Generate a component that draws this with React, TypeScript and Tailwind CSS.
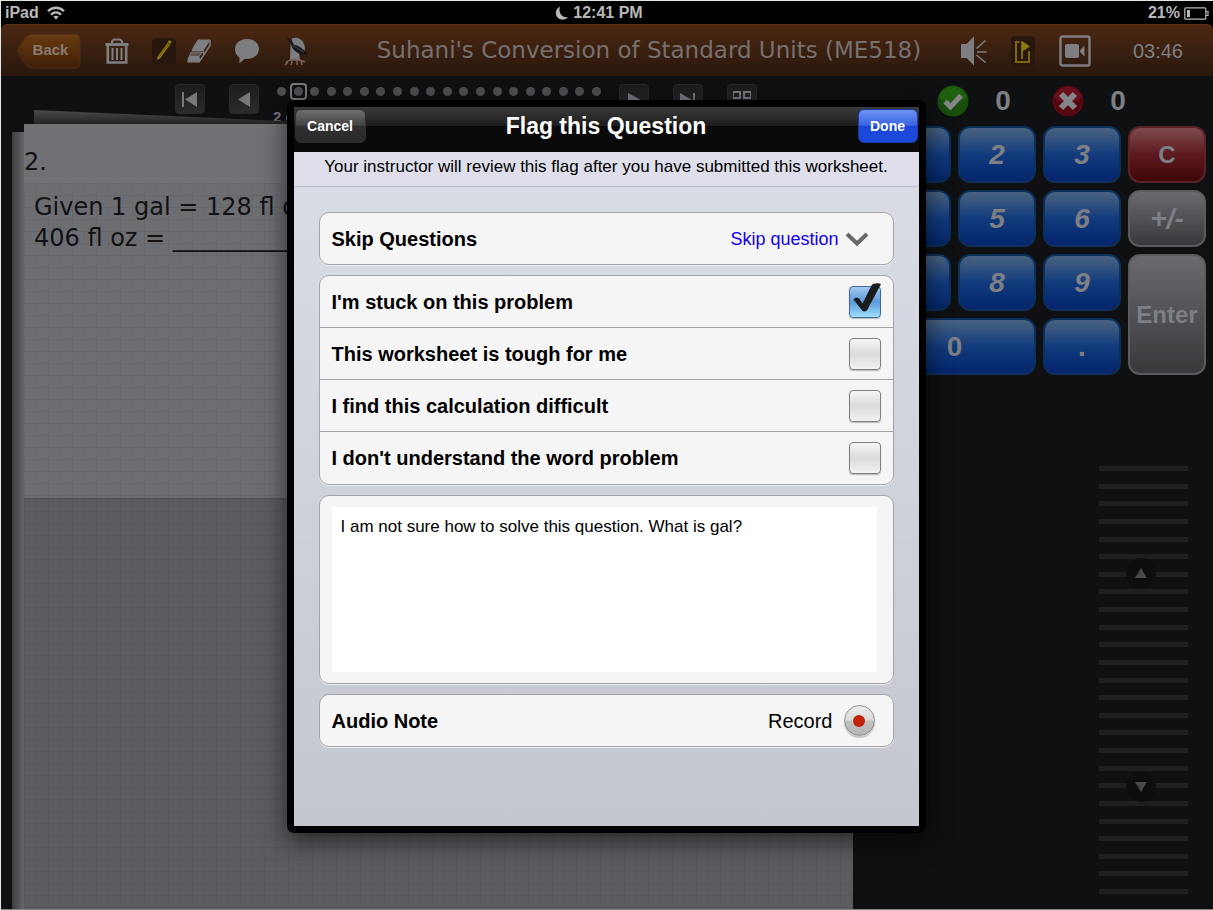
import { useState } from 'react';
import type { ReactNode } from 'react';
import clsx from 'clsx';

const REASONS = [
  "I'm stuck on this problem",
  'This worksheet is tough for me',
  'I find this calculation difficult',
  "I don't understand the word problem",
];

const DOTS = Array.from({ length: 20 }, (_, i) => i);
const RULES = Array.from({ length: 25 }, (_, i) => i);

function StatusBar() {
  return (
    <header className="grid h-[23px] grid-cols-3 items-center bg-black px-1 text-base font-bold text-[#b9b9b9]">
      <div className="flex items-center gap-2">
        <span>iPad</span>
        <svg viewBox="0 0 18 14" className="h-[14px] w-[18px]" fill="none" stroke="currentColor" strokeWidth="2.4">
          <path d="M1 5.2C5.5.6 12.5.6 17 5.2" />
          <path d="M4 8.600c2.900-2.800 7.100-2.800 10 0" />
          <path d="M9 13.500 6.300 10.800c1.600-1.500 3.800-1.500 5.400 0z" fill="currentColor" stroke="none" />
        </svg>
      </div>
      <div className="flex items-center justify-center gap-1 pr-4">
        <svg viewBox="0 0 14 14" className="h-[14px] w-[14px]" fill="currentColor">
          <path d="M5 .5C.8 2.400-.4 7.500 2.200 11c2.600 3.400 8 3.500 10.800.2C7.800 12 2.800 7.200 5 .5z" />
        </svg>
        <span>12:41 PM</span>
      </div>
      <div className="flex items-center justify-end gap-1">
        <span>21%</span>
        <svg viewBox="0 0 25 13" className="h-[13px] w-[25px]" fill="none" stroke="currentColor" strokeWidth="1.2">
          <rect x=".8" y=".8" width="21" height="11.4" rx="1" />
          <path d="M22 4.500h2v4h-2" />
          <rect x="3" y="3" width="3" height="7" fill="currentColor" stroke="none" />
        </svg>
      </div>
    </header>
  );
}

function Toolbar() {
  return (
    <div className="flex h-[52px] items-center rounded-t-md border-t border-[#5a3418] bg-linear-to-b from-[#4b2811] to-[#29170c] pr-[30px] pl-[15px] text-[#7d7e82]">
      <button type="button" className="relative h-9 w-[65px] pl-1 text-[15px] font-bold text-[#8b7b70]">
        <svg viewBox="0 0 65 36" className="absolute inset-0 h-9 w-[65px]">
          <defs>
            <linearGradient id="back" x1="0" y1="0" x2="0" y2="1">
              <stop offset="0" stopColor="#673b11" />
              <stop offset=".5" stopColor="#552d0c" />
              <stop offset="1" stopColor="#3f1f08" />
            </linearGradient>
          </defs>
          <path d="M1 18C6 11 8 1 18 1h41a5 5 0 0 1 5 5v24a5 5 0 0 1-5 5H18C8 35 6 25 1 18z" fill="url(#back)" stroke="#4c2d18" strokeWidth="1" />
        </svg>
        <span className="relative">Back</span>
      </button>

      <button type="button" aria-label="Clear" className="ml-6">
        <svg viewBox="0 0 24 26" className="h-[26px] w-6" fill="none" stroke="currentColor" strokeWidth="2">
          <path d="M.5 6.500h23" strokeWidth="3" />
          <path d="M7 5.500V3.200L9 1.500h6l2 1.700v2.300" />
          <path d="M2.800 7v17.500h18.400V7" strokeWidth="2.6" />
          <path d="M7.500 10v12M12 10v12M16.500 10v12" />
        </svg>
      </button>

      <button type="button" aria-label="Pencil" className="ml-[23px] rounded-sm bg-[#27170d]">
        <svg viewBox="0 0 24 26" className="h-[26px] w-6">
          <path d="M6.500 20 17 5.500" stroke="#8f7a08" strokeWidth="3" />
          <path d="M7 19 17 5" stroke="#665906" strokeWidth="1" />
          <path d="m5 22 .5-3 2.200 1.600z" fill="#8d7350" />
          <path d="m17 5 1.500-2.200" stroke="#8d8020" strokeWidth="3" />
        </svg>
      </button>

      <button type="button" aria-label="Eraser" className="ml-[11px]">
        <svg viewBox="0 0 24 26" className="h-[26px] w-6" strokeLinejoin="round">
          <path d="M11 2h12l-6.500 10H5z" fill="currentColor" stroke="currentColor" />
          <path d="M23 2v5.500L12 24v-5.500" fill="none" stroke="currentColor" strokeWidth="1.5" />
          <path d="M5 12.500h11.500v5.500" fill="none" stroke="currentColor" strokeWidth="1" />
          <path d="M4.500 14h11L12 18.500H2z" fill="#5f564f" stroke="currentColor" strokeWidth="1" />
          <path d="M1.500 19.500H12L11.500 24H.8z" fill="currentColor" stroke="currentColor" strokeWidth="1" />
        </svg>
      </button>

      <button type="button" aria-label="Comment" className="ml-[23px]">
        <svg viewBox="0 0 26 26" className="h-[26px] w-[26px]" fill="currentColor">
          <path d="M13 1c7 0 12 4.300 12 10s-5 10-12 10c-1 0-1.600 0-2.400-.2-1.500 1.900-3.400 3.400-5.700 4 .7-1.600.9-3.600.5-5.300C2.600 17.700 1 14.800 1 11 1 5.300 6 1 13 1z" />
        </svg>
      </button>

      <button type="button" aria-label="Scratchpad" className="ml-6">
        <svg viewBox="0 0 26 30" className="h-[30px] w-[26px]">
          <path d="M8 2.500C13 .5 18 3 20 8c1 3 1 5 .5 7L15 16.500l1 8H6L6.500 10z" fill="#7d7e82" />
          <path d="M2.500 1.500 7 3l3 6c3 0 7 2 9.500 5l4 3-2 2c-5 0-9-2-12-5.500C7.500 11.500 8 10 7 8z" fill="#17171a" />
          <path d="m9 9.500 11 7" stroke="#47484c" strokeWidth="1" />
          <path d="M2 26c5-3.500 13-3.500 19 0M1 29l3-3M7 29l1-4M13 29v-4M18 29l-1-4" fill="none" stroke="#7b6355" strokeWidth="1.5" />
        </svg>
      </button>

      <h1 className="min-w-0 flex-1 truncate pl-[27px] text-center font-['DejaVu_Sans',sans-serif] text-[23px] text-[#77706e]">
        Suhani's Conversion of Standard Units (ME518)
      </h1>

      <div className="flex items-center gap-6">
        <button type="button" aria-label="Sound">
          <svg viewBox="0 0 26 30" className="h-[30px] w-[26px]" fill="currentColor">
            <path d="M0 8h5.500L13 .5v29L5.500 22H0z" />
            <path d="m15.500 12.500 9-8M16 16h9.500M15.500 19l9 7.500" stroke="currentColor" strokeWidth="1.6" />
          </svg>
        </button>
        <button type="button" aria-label="Flag question" className="rounded-sm bg-[#27170d]">
          <svg viewBox="0 0 24 30" className="h-[30px] w-6" fill="none" stroke="#80650a" strokeWidth="2">
            <path d="M8.500 6H5v20h13V15" />
            <path d="M11 23V5.500" />
            <path d="m11 5 8 5.500-8 5z" fill="#8d7a0c" stroke="none" />
          </svg>
        </button>
        <button type="button" aria-label="Video">
          <svg viewBox="0 0 32 32" className="h-8 w-8" fill="currentColor">
            <rect x="1.500" y="1.500" width="29" height="29" rx="2" fill="none" stroke="currentColor" strokeWidth="2.4" />
            <rect x="6" y="9" width="14" height="14" rx="2" />
            <path d="m21 15.500 4.500-5v11L21 17z" />
          </svg>
        </button>
      </div>
      <time className="ml-[42px] text-xl">03:46</time>
    </div>
  );
}

function NavButton({ label, children }: { label: string; children: ReactNode }) {
  return (
    <button
      type="button"
      aria-label={label}
      className="flex h-[30px] w-[30px] items-center justify-center rounded-sm border border-[#27282a] bg-linear-to-b from-[#1b1c1e] to-[#2b2c2e] text-[#77787b]"
    >
      <svg viewBox="0 0 18 18" className="h-[18px] w-[18px]" fill="currentColor">
        {children}
      </svg>
    </button>
  );
}

function QuestionNav() {
  return (
    <nav className="flex h-12 items-start gap-[14px] pt-2 pl-[174px]">
      <div className="flex gap-6">
        <NavButton label="First question">
          <path d="M1 2h2v15H1zM16 2v15L4 9.500z" />
        </NavButton>
        <NavButton label="Previous question">
          <path d="M15 2v15L3 9.500z" />
        </NavButton>
      </div>
      <div className="w-[332px] pt-[3px]">
        <ol className="flex justify-between px-1">
          {DOTS.map((n) => (
            <li key={n} className="relative h-[9px] w-[9px] rounded-full bg-[#4d4e51]">
              {n === 1 && <span className="absolute -inset-1 rounded-sm border-2 border-[#77787b]" />}
            </li>
          ))}
        </ol>
        <p className="mt-[13px] text-[15px] leading-4 font-bold text-[#77787b]">2 of 20</p>
      </div>
      <div className="flex gap-6">
        <NavButton label="Next question">
          <path d="M3 3v14l13-7z" />
        </NavButton>
        <NavButton label="Last question">
          <path d="M1 3v14l12-7zM14 3h2v14h-2z" />
        </NavButton>
        <NavButton label="All questions">
          <path d="M-1 1h9v8h-9zm2 2v4h5V3zM10 1h9v8h-9zm2 2v4h5V3z" fillRule="evenodd" />
        </NavButton>
      </div>
    </nav>
  );
}

const GRID =
  'bg-[linear-gradient(#0000000b_1px,transparent_1px),linear-gradient(90deg,#0000000b_1px,transparent_1px)] bg-[size:12px_12px]';

function Worksheet() {
  return (
    <section className="relative ml-[23px] flex flex-1 flex-col font-['DejaVu_Sans',sans-serif] text-2xl text-[#121214]">
      {/* loose sheets lying under the page */}
      <div className="absolute -top-[14px] left-[10px] h-[14px] w-[320px] bg-linear-to-b from-[#4a4b4d] to-[#232426] [clip-path:polygon(0_0,100%_100%,0_100%)]" />
      <div className="absolute top-2 bottom-0 -left-3 w-3 bg-linear-to-r from-[#3d3e41] to-[#66676b]" />
      <div className="relative h-[59px] bg-[#707175] pt-[23px]">
        <h2 className="leading-[31px]">2.</h2>
      </div>
      <div className={clsx('relative h-[315px] bg-[#6d6e72] pt-[9px] pl-[10px] leading-[31px]', GRID)}>
        <p>Given 1 gal = 128 fl oz,</p>
        <p>406 fl oz = __________ gal</p>
      </div>
      <div className={clsx('relative flex-1 border-t border-[#505154] bg-[#5b5c60]', GRID)} />
    </section>
  );
}

const KEY_TONES = {
  blue: 'border-[#0b3059] from-[#48627f] via-[#123b7d] to-[#05246c]',
  red: 'border-[#5c2327] from-[#7d4a4e] via-[#5d1a1e] to-[#3f0709]',
  gray: 'border-[#5a5b5f] from-[#6a6b6f] via-[#515255] to-[#38393b]',
};

function Key({ label, tone = 'blue', className }: { label: string; tone?: keyof typeof KEY_TONES; className?: string }) {
  return (
    <button
      type="button"
      className={clsx(
        'flex items-center justify-center rounded-xl border-2 bg-linear-to-b',
        KEY_TONES[tone],
        className,
      )}
    >
      {label}
    </button>
  );
}

function Keypad() {
  return (
    <div className="grid auto-rows-[57px] grid-cols-[repeat(4,78px)] justify-end gap-[7px] text-[28px] font-bold text-[#7d7f84]">
      <Key label="1" />
      <Key label="2" className="italic" />
      <Key label="3" className="italic" />
      <Key label="C" tone="red" className="text-2xl" />
      <Key label="4" />
      <Key label="5" className="italic" />
      <Key label="6" className="italic" />
      <Key label="+/-" tone="gray" className="italic" />
      <Key label="7" />
      <Key label="8" className="italic" />
      <Key label="9" className="italic" />
      <Key label="Enter" tone="gray" className="row-span-2 text-2xl" />
      <Key label="0" className="col-span-2" />
      <Key label="." />
    </div>
  );
}

function Score() {
  return (
    <div className="flex h-[50px] items-center pl-[84px] text-[28px] font-bold text-[#7d7f84]">
      <svg viewBox="0 0 32 32" className="h-8 w-8">
        <circle cx="16" cy="16" r="15.500" fill="#174f0b" />
        <path d="M2 13C6-2 26-2 30 13c-8 5-20 6-28 0z" fill="#216011" />
        <path d="m8 16.500 5.500 5.500L24 10.500" fill="none" stroke="#85868a" strokeWidth="5" />
      </svg>
      <span className="w-[68px] text-center">0</span>
      <svg viewBox="0 0 32 32" className="ml-[15px] h-8 w-8">
        <circle cx="16" cy="16" r="15.500" fill="#56060f" />
        <path d="M2 13C6-2 26-2 30 13c-8 5-20 6-28 0z" fill="#68101b" />
        <path d="m9 9 14 14M23 9 9 23" stroke="#85868a" strokeWidth="6" />
      </svg>
      <span className="w-[68px] text-center">0</span>
    </div>
  );
}

function ScrollRuler() {
  return (
    <div className="relative mt-[91px] mr-[18px] mb-[15px] flex w-[89px] flex-1 flex-col justify-between self-end">
      {RULES.map((n) => (
        <div key={n} className="h-[5px] bg-[#1e1f21]" />
      ))}
      <button type="button" aria-label="Scroll up" className="absolute top-1/4 left-[27px] flex h-[30px] w-[30px] -translate-y-1/2 items-center justify-center rounded-full bg-[#0c0d0e]">
        <svg viewBox="0 0 12 10" className="h-[10px] w-3" fill="#47484b"><path d="M6 0l6 10H0z" /></svg>
      </button>
      <button type="button" aria-label="Scroll down" className="absolute top-3/4 left-[27px] flex h-[30px] w-[30px] -translate-y-1/2 items-center justify-center rounded-full bg-[#0c0d0e]">
        <svg viewBox="0 0 12 10" className="h-[10px] w-3" fill="#47484b"><path d="M0 0h12L6 10z" /></svg>
      </button>
    </div>
  );
}

const CARD = 'rounded-[10px] border border-[#a3a4a8] bg-[#f5f5f5] shadow-[0_1px_0_#eceef2]';

function FlagDialog() {
  const [checked, setChecked] = useState([true, false, false, false]);
  const [note, setNote] = useState('I am not sure how to solve this question. What is gal?');

  const toggle = (index: number) => setChecked(checked.map((value, i) => (i === index ? !value : value)));

  return (
    <div className="absolute inset-x-0 top-[99px] flex justify-center pr-[2px]">
      <div
        role="dialog"
        aria-labelledby="flag-title"
        className="w-[639px] rounded-[7px] border-[7px] border-black bg-linear-to-b from-[#dcdfe8] to-[#c4c7cf] text-black shadow-[0_8px_26px_rgba(0,0,0,0.6)]"
      >
        <div className="flex h-[45px] items-start justify-between bg-[linear-gradient(#3b3b3b,#1c1c1c_42%,#0a0a0a_43%,#0a0a0a)] px-px pt-[2px] text-white">
          <button type="button" className="h-[34px] w-[71px] rounded-md border border-[#2f2f2f] bg-[linear-gradient(#6e6e6e,#424242_48%,#303030_50%,#2a2a2a)] text-sm font-bold">
            Cancel
          </button>
          <h2 id="flag-title" className="text-[23px] leading-[34px] font-bold">
            Flag this Question
          </h2>
          <div className="flex w-[71px] justify-end">
            <button type="button" className="h-[34px] w-[60px] rounded-md border border-[#1c3aa0] bg-[linear-gradient(#6f93f3,#3b63e4_48%,#1c46da_50%,#1c48dc)] text-sm font-bold">
              Done
            </button>
          </div>
        </div>

        <p className="h-[35px] border-b border-[#b9bcc8] bg-[#dedfeb] text-center text-[17px] leading-[30px]">
          Your instructor will review this flag after you have submitted this worksheet.
        </p>

        <form className="flex flex-col gap-[10px] px-[25px] pt-[25px] pb-[79px] text-xl" onSubmit={(e) => e.preventDefault()}>
          <div className={clsx('flex h-[53px] items-center justify-between pr-6 pl-3', CARD)}>
            <label htmlFor="skip" className="font-bold">Skip Questions</label>
            <div className="relative flex items-center">
              <select id="skip" className="field-sizing-content appearance-none bg-transparent pr-[30px] text-lg text-[#1400f0]">
                <option>Skip question</option>
                <option>Skip worksheet</option>
              </select>
              <svg viewBox="0 0 24 16" className="pointer-events-none absolute right-0 h-4 w-6" fill="none" stroke="#69696b" strokeWidth="4">
                <path d="m2 3 10 9.500L22 3" />
              </svg>
            </div>
          </div>

          <div className={clsx('divide-y divide-[#a3a4a8]', CARD)}>
            {REASONS.map((reason, i) => (
              <label key={reason} className="flex h-[52px] items-center justify-between px-3 font-bold">
                {reason}
                <span className="relative h-8 w-8">
                  <input
                    type="checkbox"
                    checked={checked[i]}
                    onChange={() => toggle(i)}
                    className="block h-8 w-8 appearance-none rounded-sm border border-[#7f8082] bg-linear-to-b from-[#f6f6f6] via-[#dadada] to-[#f2f2f2] shadow-[0_1px_1px_#b8b8b8] checked:border-[#41699c] checked:from-[#a5c9ee] checked:via-[#5a9adb] checked:to-[#9fe0fc]"
                  />
                  {checked[i] && (
                    <svg viewBox="0 0 32 32" className="pointer-events-none absolute inset-0 h-8 w-8 overflow-visible">
                      <path d="M4.500 13.500c1-1.800 4.500-2.500 6-.5l3 4.500L22.500-.5c1-2 7-3 9.500-1.500L18.500 23.500c-1 2.200-4 2.700-5.500.8z" fill="#1b1c1e" />
                    </svg>
                  )}
                </span>
              </label>
            ))}
          </div>

          <div className={clsx('pt-[11px] pr-4 pb-[11px] pl-3', CARD)}>
            <textarea
              aria-label="Note to instructor"
              value={note}
              onChange={(e) => setNote(e.target.value)}
              className="block h-[165px] w-full resize-none bg-white px-[9px] py-2 text-[17px] outline-none"
            />
          </div>

          <div className={clsx('flex h-[53px] items-center justify-between pr-[18px] pl-3', CARD)}>
            <span className="font-bold">Audio Note</span>
            <button type="button" className="flex items-center gap-[11px]">
              Record
              <span className="flex h-[31px] w-[31px] items-center justify-center rounded-full border border-[#8f8f91] bg-[linear-gradient(#ededed,#dadada_48%,#c3c3c3_52%,#b4b4b4)] shadow-[0_2px_1px_#c4c4c4]">
                <span className="h-3 w-3 rounded-full bg-[#c22308]" />
              </span>
            </button>
          </div>
        </form>
      </div>
    </div>
  );
}

export default function App() {
  return (
    <div className="relative flex min-h-screen flex-col border-t border-l border-[#dfe7e4] bg-black font-['Liberation_Sans',Arial,sans-serif]">
      <StatusBar />
      <Toolbar />
      <main className="flex flex-1 border-b border-[#808184] bg-[#0e1012]">
        <div className="flex min-w-0 flex-1 flex-col">
          <QuestionNav />
          <Worksheet />
        </div>
        <aside className="flex w-[360px] flex-col pr-[7px]">
          <Score />
          <Keypad />
          <ScrollRuler />
        </aside>
      </main>
      <FlagDialog />
    </div>
  );
}
